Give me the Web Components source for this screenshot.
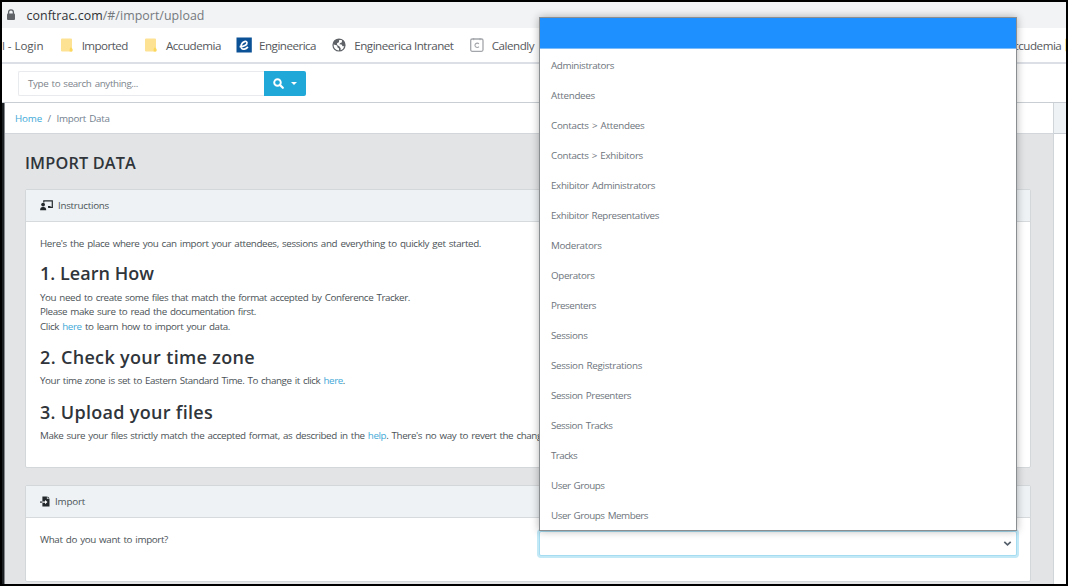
<!DOCTYPE html>
<html lang="en">
<head>
<meta charset="utf-8">
<title>Import Data</title>
<style>
  html, body {
    margin: 0;
    height: 100%;
    overflow: hidden;
  }

  body {
    font-family: "Open Sans", "Noto Sans", sans-serif;
    font-size: 9.8px;
    word-spacing: 1px;
    color: #4b5257;
  }
</style>
</head>
<body>
<import-page></import-page>

<script>
// Single line of text, tracked to a given width
class FitText extends HTMLElement {
  constructor() {
    super();
    this.attachShadow({ mode: "open" });
    this.shadowRoot.innerHTML = `
      <style>
        :host {
          display: inline-block;
          white-space: nowrap;
        }
      </style><slot></slot>`;
  }

  connectedCallback() {
    const width = parseFloat(this.getAttribute("w"));
    if (!width) return;
    const natural = this.getBoundingClientRect().width;
    this.style.letterSpacing = (width - natural) / this.textContent.length + "px";
  }
}

const ICONS = {
  lock: `<svg width="10" height="12" viewBox="0 0 10 12"><path d="M2.6 5V3.2a2.4 2.4 0 0 1 4.8 0V5" fill="none" stroke="#5f6368" stroke-width="1.3"/><rect x="1" y="4.4" width="8" height="6.6" rx="1" fill="#5f6368"/></svg>`,
  folder: `<svg width="16" height="16" viewBox="0 0 16 16"><path d="M3 1.5h9a1 1 0 0 1 1 1V14.5H3a1 1 0 0 1-1-1v-11a1 1 0 0 1 1-1z" fill="#fde293"/><path d="M10.6 14.5v-2.5l1.2-1.8 1.8 1.8v1.5a1 1 0 0 1-1 1z" fill="#fbd75b"/></svg>`,
  engineerica: `<svg width="16" height="16" viewBox="0 0 16 16"><rect x=".5" y=".5" width="15.3" height="15" fill="#0b5196"/><path d="M3.6 9.6C7.5 9.8 11.4 7.8 11 5.6 10.6 3.5 6.6 4.3 5.3 7.8 4.3 11 6 12.5 8.3 12.1c1.6-.3 2.8-1.2 3.6-2.2" fill="none" stroke="#fff" stroke-width="1.7"/></svg>`,
  globe: `<svg width="16" height="16" viewBox="0 0 16 16"><circle cx="8" cy="8" r="6.6" fill="#5f6368"/><path d="M2.6 7.6 6.2 8.6 6.4 10.2 8 11.6V13.6A5.6 5.6 0 0 1 2.6 7.6z" fill="#fff"/><path d="M8.2 3.1 10.8 3 11 5.2 9.3 6 8.3 7.3 10.6 7.6 11.6 9.2 13.3 9.3A5.6 5.6 0 0 1 9.6 13.3L9.7 11.3 8.3 9.3 6.2 8 6 6.3 7.9 5.2z" fill="#fff"/></svg>`,
  calendly: `<svg width="16" height="16" viewBox="0 0 16 16"><rect x="1.7" y="2" width="12.3" height="12.3" rx="1.5" fill="#fff" stroke="#a3a6aa" stroke-width="1.3"/><path d="M4.7 1v2.2M11 1v2.2" stroke="#a3a6aa"/><path d="M9.9 7a2.2 2.2 0 1 0 0 2.7" fill="none" stroke="#a3a6aa" stroke-width="1.1"/></svg>`,
  search: `<svg width="11" height="11" viewBox="0 0 11 11"><circle cx="4.5" cy="4.5" r="3.3" fill="none" stroke="#fff" stroke-width="1.9"/><path d="M7 7l2.8 2.8" stroke="#fff" stroke-width="2.2" stroke-linecap="round"/></svg>`,
  teacher: `<svg width="13" height="11" viewBox="0 0 13 11"><path d="M3.8 2.5V.8h8.5v6.6H8.5" fill="none" stroke="#23282c" stroke-width="1.2"/><path d="M8 6h2.5v1.8H8z" fill="#23282c"/><circle cx="3.1" cy="4.6" r="1.9" fill="#23282c"/><path d="M.1 10.2c0-2.1 1.1-3.1 2.5-3.1h1c1.5 0 2.6 1 2.6 3.1z" fill="#23282c"/></svg>`,
  fileImport: `<svg width="10" height="11" viewBox="0 0 10 11"><path d="M2.4.5h4.5v2.5h2.6v7.5H2.4z" fill="#23282c"/><path d="M7.5.3 9.7 2.5H7.5z" fill="#23282c"/><path d="M0 6.1h2.4" stroke="#23282c" stroke-width="1.2"/><path d="M2.4 6.1h3.4" stroke="#fff" stroke-width="1.2"/><path d="M5 3.9 7.5 6.1 5 8.3z" fill="#fff"/></svg>`,
  chevron: `<svg width="9" height="7" viewBox="0 0 9 7"><path d="M1.3 1.8 4.5 4.8 7.7 1.8" fill="none" stroke="#55606b" stroke-width="1.7"/></svg>`
};

class AddressBar extends HTMLElement {
  constructor() {
    super();
    this.attachShadow({ mode: "open" });
    this.shadowRoot.innerHTML = `
      <style>
        :host {
          display: flex;
          align-items: center;
          gap: 10.5px;
          height: 26px;
          padding-left: 4px;
          background: #f1f3f4;
          font-size: 12.4px;
          color: #75797e;
        }

        svg {
          display: block;
        }

        b {
          font-weight: 400;
          color: #303236;
        }
      </style>
      ${ICONS.lock}<fit-text w="178"><b>conftrac.com</b>/#/import/upload</fit-text>`;
  }
}

class BookmarkItem extends HTMLElement {
  constructor() {
    super();
    this.attachShadow({ mode: "open" });
    this.shadowRoot.innerHTML = `
      <style>
        :host {
          display: flex;
          flex: none;
          align-items: center;
          gap: 7px;
        }

        svg {
          display: block;
        }
      </style>
      ${ICONS[this.getAttribute("icon")] || ""}<slot></slot>`;
  }
}

class BookmarksBar extends HTMLElement {
  constructor() {
    super();
    this.attachShadow({ mode: "open" });
    this.shadowRoot.innerHTML = `
      <style>
        :host {
          display: flex;
          align-items: center;
          gap: 15.2px;
          box-sizing: border-box;
          height: 36px;
          border-bottom: 2px solid #dcdfe5;
          background: #fff;
          font-size: 11.6px;
          word-spacing: 0;
          color: #55585c;
          overflow: hidden;
        }

        .last {
          margin-left: 434px;
        }

        .cut {
          margin-left: -13.6px;
        }
      </style>
      <fit-text w="41.5">l - Login</fit-text>
      <bookmark-item icon="folder"><fit-text w="46">Imported</fit-text></bookmark-item>
      <bookmark-item icon="folder"><fit-text w="55">Accudemia</fit-text></bookmark-item>
      <bookmark-item icon="engineerica"><fit-text w="57">Engineerica</fit-text></bookmark-item>
      <bookmark-item icon="globe"><fit-text w="99.2">Engineerica Intranet</fit-text></bookmark-item>
      <bookmark-item icon="calendly"><fit-text w="42.5">Calendly</fit-text></bookmark-item>
      <bookmark-item class="last" icon="folder"><fit-text w="55">Accudemia</fit-text></bookmark-item>
      <bookmark-item class="cut" icon="folder"></bookmark-item>`;
  }
}

class SearchBar extends HTMLElement {
  constructor() {
    super();
    this.attachShadow({ mode: "open" });
    this.shadowRoot.innerHTML = `
      <style>
        :host {
          display: flex;
          align-items: center;
          box-sizing: border-box;
          height: 39px;
          padding-left: 16px;
          border-bottom: 1px solid #c8ced3;
          background: #fff;
        }

        .field {
          display: flex;
          align-items: center;
          box-sizing: border-box;
          width: 246px;
          height: 25px;
          padding-left: 9px;
          border: 1px solid #e8eaed;
          border-right: 0;
          border-radius: 2px 0 0 2px;
          color: #7d848c;
        }

        .button {
          display: flex;
          align-items: center;
          justify-content: center;
          gap: 7px;
          width: 42px;
          height: 25px;
          border-radius: 0 2px 2px 0;
          background: #20a8d8;
        }

        .caret {
          border: 3px solid transparent;
          border-top-color: #fff;
          border-bottom: 0;
        }
      </style>
      <div class="field"><fit-text w="110">Type to search anything...</fit-text></div>
      <div class="button">${ICONS.search}<span class="caret"></span></div>`;
  }
}

class BreadCrumb extends HTMLElement {
  constructor() {
    super();
    this.attachShadow({ mode: "open" });
    this.shadowRoot.innerHTML = `
      <style>
        :host {
          display: flex;
          align-items: center;
          gap: 5.5px;
          box-sizing: border-box;
          height: 31px;
          padding-left: 10px;
          border-bottom: 1px solid #d3d7db;
          background: #fff;
          color: #73818f;
        }
      </style>
      <slot></slot>`;
  }
}

class PanelCard extends HTMLElement {
  constructor() {
    super();
    this.attachShadow({ mode: "open" });
    this.shadowRoot.innerHTML = `
      <style>
        :host {
          display: block;
          box-sizing: border-box;
          border: 1px solid #d3d7da;
          border-radius: 2px;
          background: #fff;
        }

        header {
          display: flex;
          align-items: center;
          gap: 5px;
          height: 31px;
          padding-left: 14px;
          border-bottom: 1px solid #d6dadd;
          background: #eef2f5;
        }

        svg {
          display: block;
        }

        .body {
          padding: 14.5px 14px;
        }
      </style>
      <header>${ICONS[this.getAttribute("icon")]}<slot name="title"></slot></header>
      <div class="body"><slot></slot></div>`;
  }
}

class SelectMenu extends HTMLElement {
  constructor() {
    super();
    const options = [
      ["Administrators", 63], ["Attendees", 44], ["Contacts > Attendees", 93.5],
      ["Contacts > Exhibitors", 92], ["Exhibitor Administrators", 104],
      ["Exhibitor Representatives", 108], ["Moderators", 50.5], ["Operators", 43.5],
      ["Presenters", 45], ["Sessions", 36.5], ["Session Registrations", 91],
      ["Session Presenters", 80], ["Session Tracks", 61.5], ["Tracks", 26],
      ["User Groups", 53.5], ["User Groups Members", 97]
    ];
    this.attachShadow({ mode: "open" });
    this.shadowRoot.innerHTML = `
      <style>
        :host {
          display: block;
          box-sizing: border-box;
          border: 1px solid #8b8e91;
          background: #fff;
          box-shadow: 0 0 8px rgba(0, 0, 0, 0.3);
          color: #6d747c;
        }

        .selected {
          height: 30px;
          border-bottom: 1px solid #7dbcfb;
          background: #1e90ff;
        }

        .option {
          display: flex;
          align-items: center;
          box-sizing: border-box;
          height: 30.06px;
          padding: 2px 0 0 11px;
        }
      </style>
      <div class="selected"></div>
      ${options.map(([label, w]) => `<div class="option"><fit-text w="${w}">${label.replace(">", "&gt;")}</fit-text></div>`).join("")}`;
  }
}

class SelectField extends HTMLElement {
  constructor() {
    super();
    this.attachShadow({ mode: "open" });
    this.shadowRoot.innerHTML = `
      <style>
        :host {
          display: flex;
          align-items: center;
          justify-content: flex-end;
          box-sizing: border-box;
          width: 478px;
          height: 25px;
          margin-top: -1.5px;
          padding-right: 4px;
          border: 1px solid #a5dcf1;
          border-radius: 2px;
          background: #fff;
          box-shadow: 0 0 0 2px #c3e8f6;
        }
      </style>
      ${ICONS.chevron}`;
  }
}

class ImportPage extends HTMLElement {
  constructor() {
    super();
    this.attachShadow({ mode: "open" });
    this.shadowRoot.innerHTML = `
      <style>
        :host {
          display: flex;
          flex-direction: column;
          position: relative;
          box-sizing: border-box;
          width: 1068px;
          height: 586px;
          border: 2px solid #000;
          background: #fff;
          overflow: hidden;
        }

        address-bar, bookmarks-bar, search-bar {
          flex: none;
        }

        .app {
          display: flex;
          flex: 1;
          min-height: 0;
        }

        .sidebar {
          box-sizing: border-box;
          width: 3px;
          border-right: 1px solid #85898d;
          background: #1d2023;
        }

        main {
          flex: 1;
          background: #e3e4e6;
        }

        aside {
          box-sizing: border-box;
          width: 13px;
          border-left: 1px solid #d0d5d9;
          background: #fff;
        }

        .tab {
          height: 30px;
          border-bottom: 1px solid #c8ced3;
          background: #eef2f5;
        }

        .content {
          padding: 17px 22px 0 20px;
        }

        h1, h2 {
          margin: 0;
          font-weight: 600;
          word-spacing: 0;
          color: #2f353a;
        }

        h1 {
          font-size: 16.3px;
          line-height: 24px;
          margin-bottom: 14px;
        }

        h2 {
          font-size: 18px;
          line-height: 20px;
          margin: 13px 0 7.1px;
        }

        h2.first {
          margin: 12px 0 8.3px;
        }

        p {
          margin: 0;
          line-height: 14.33px;
        }

        fit-text {
          vertical-align: top;
        }

        a {
          color: #3fa9d8;
          text-decoration: none;
        }

        .instructions {
          height: 279px;
          margin-bottom: 17px;
        }

        .upload {
          height: 97px;
        }

        .row {
          display: flex;
          justify-content: space-between;
          align-items: flex-start;
          margin-right: -1px;
        }

        select-menu {
          position: absolute;
          left: 537px;
          top: 15px;
          width: 478px;
          height: 514px;
        }
      </style>
      <address-bar></address-bar>
      <bookmarks-bar></bookmarks-bar>
      <search-bar></search-bar>
      <div class="app">
        <div class="sidebar"></div>
        <main>
          <bread-crumb>
            <a><fit-text w="27">Home</fit-text></a><span>/</span><fit-text w="53">Import Data</fit-text>
          </bread-crumb>
          <div class="content">
            <h1><fit-text w="111">IMPORT DATA</fit-text></h1>
            <panel-card class="instructions" icon="teacher">
              <fit-text slot="title" w="51">Instructions</fit-text>
              <p><fit-text w="441">Here's the place where you can import your attendees, sessions and everything to quickly get started.</fit-text></p>
              <h2 class="first"><fit-text w="114">1. Learn How</fit-text></h2>
              <p><fit-text w="370">You need to create some files that match the format accepted by Conference Tracker.</fit-text></p>
              <p><fit-text w="216">Please make sure to read the documentation first.</fit-text></p>
              <p><fit-text w="190">Click <a>here</a> to learn how to import your data.</fit-text></p>
              <h2><fit-text w="215">2. Check your time zone</fit-text></h2>
              <p><fit-text w="305">Your time zone is set to Eastern Standard Time. To change it click <a>here</a>.</fit-text></p>
              <h2><fit-text w="173">3. Upload your files</fit-text></h2>
              <p><fit-text w="513.5">Make sure your files strictly match the accepted format, as described in the <a>help</a>. There's no way to revert the changes.</fit-text></p>
            </panel-card>
            <panel-card class="upload" icon="fileImport">
              <fit-text slot="title" w="30">Import</fit-text>
              <div class="row">
                <p><fit-text w="128">What do you want to import?</fit-text></p>
                <select-field></select-field>
              </div>
            </panel-card>
          </div>
        </main>
        <aside><div class="tab"></div></aside>
      </div>
      <select-menu></select-menu>`;
  }
}

customElements.define("address-bar", AddressBar);
customElements.define("bookmark-item", BookmarkItem);
customElements.define("bookmarks-bar", BookmarksBar);
customElements.define("search-bar", SearchBar);
customElements.define("bread-crumb", BreadCrumb);
customElements.define("panel-card", PanelCard);
customElements.define("select-menu", SelectMenu);
customElements.define("select-field", SelectField);
customElements.define("import-page", ImportPage);
// Defined last, so that text is measured once the page is laid out
customElements.define("fit-text", FitText);
</script>
</body>
</html>
